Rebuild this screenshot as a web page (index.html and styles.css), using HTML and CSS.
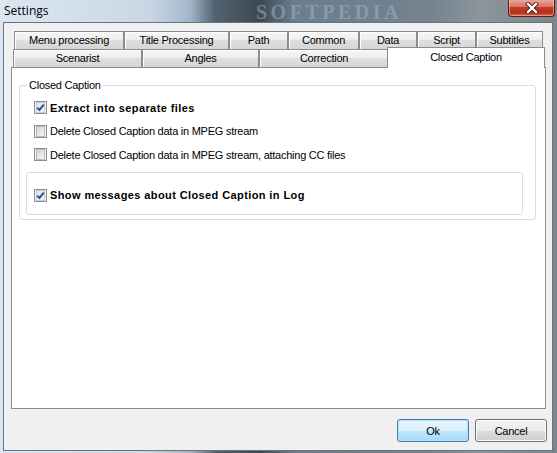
FILE: index.html
```html
<!DOCTYPE html>
<html lang="en">
<head>
    <meta charset="UTF-8">
    <title>Settings</title>
    <link rel="stylesheet" href="styles.css">
</head>
<body>
    <div class="window">
        <div class="titlebar">
            <span class="title">Settings</span>
            <span class="watermark">SOFTPEDIA</span>
            <div class="close">
                <svg width="18" height="12" viewBox="0 0 18 12">
                    <path d="M5 2 L13 10 M13 2 L5 10" stroke="#4a1a12" stroke-width="4.2" stroke-linecap="square"/>
                    <path d="M5 2 L13 10 M13 2 L5 10" stroke="#fff" stroke-width="2.4" stroke-linecap="square"/>
                </svg>
            </div>
        </div>

        <div class="client">
            <div class="tabs">
                <div class="tab-row row-top">
                    <div class="tab" style="width:110px">Menu processing</div>
                    <div class="tab" style="width:105px">Title Processing</div>
                    <div class="tab" style="width:59px">Path</div>
                    <div class="tab" style="width:71px">Common</div>
                    <div class="tab" style="width:58px">Data</div>
                    <div class="tab" style="width:59px">Script</div>
                    <div class="tab" style="width:67px">Subtitles</div>
                </div>
                <div class="tab-row row-bottom">
                    <div class="tab" style="width:129px">Scenarist</div>
                    <div class="tab" style="width:117px">Angles</div>
                    <div class="tab" style="width:130px">Correction</div>
                    <div class="tab selected" style="width:158px">Closed Caption</div>
                </div>
            </div>

            <div class="page">
                <fieldset class="group">
                    <legend>Closed Caption</legend>
                    <div class="option bold">
                        <span class="check checked"><svg width="9" height="9" viewBox="0 0 9 9"><path d="M1.2 4.6 L3.4 7 L7.8 1.6" fill="none" stroke="#2f4f9a" stroke-width="2"/></svg></span>
                        Extract into separate files
                    </div>
                    <div class="option">
                        <span class="check"></span>
                        Delete Closed Caption data in MPEG stream
                    </div>
                    <div class="option">
                        <span class="check"></span>
                        Delete Closed Caption data in MPEG stream, attaching CC files
                    </div>
                    <div class="panel">
                        <div class="option bold">
                            <span class="check checked"><svg width="9" height="9" viewBox="0 0 9 9"><path d="M1.2 4.6 L3.4 7 L7.8 1.6" fill="none" stroke="#2f4f9a" stroke-width="2"/></svg></span>
                            Show messages about Closed Caption in Log
                        </div>
                    </div>
                </fieldset>
            </div>

            <div class="footer">
                <button class="btn default">Ok</button>
                <button class="btn">Cancel</button>
            </div>
        </div>
    </div>
</body>
</html>
```

FILE: styles.css
```css
* {
    margin: 0;
    padding: 0;
    box-sizing: border-box;
}

body {
    font-family: 'Liberation Sans', Arial, sans-serif;
    font-size: 11px;
    letter-spacing: -0.25px;
    color: #000;
    overflow: hidden;
}

/* window frame, glass look */
.window {
    width: 557px;
    height: 453px;
    display: flex;
    flex-direction: column;
    background: linear-gradient(90deg,
        #dbe6f2 0px, #c9d7e5 150px, #a3b6c8 190px, #51626f 215px,
        #3c4953 260px, #6b7e8e 295px, #73838f 430px, #8c959b 480px,
        #7b868e 557px);
}

.titlebar {
    height: 22px;
    position: relative;
    display: flex;
    align-items: center;
    padding-left: 4px;
}

.title {
    font-family: 'Open Sans', 'Noto Sans', sans-serif;
    font-size: 12px;
    letter-spacing: 0;
    color: #000;
    margin-top: -1px;
}

.watermark {
    position: absolute;
    left: 256px;
    top: 2px;
    font-family: 'Liberation Serif', serif;
    font-weight: bold;
    font-size: 20px;
    line-height: 20px;
    letter-spacing: 3.5px;
    color: #a6b6c4;
    opacity: 0.5;
}

.close {
    position: absolute;
    right: 2px;
    top: -1px;
    width: 47px;
    height: 18px;
    border: 1px solid #5e1c12;
    border-top: none;
    border-radius: 0 0 4px 4px;
    background: linear-gradient(#eab0a3, #d9735f 45%, #c43d22 50%, #b9301a 80%, #d8694a);
    box-shadow: inset 0 0 0 1px rgba(255, 220, 210, 0.45);
    display: flex;
    align-items: center;
    justify-content: center;
}

.client {
    flex: 1;
    margin: 0 4px 2px 3px;
    border: 1px solid #6b737b;
    background: #f0f0f0;
    padding: 8px 6px 0 7px;
    display: flex;
    flex-direction: column;
}

/* tabs */
.tab-row {
    display: flex;
    height: 18px;
}

.row-top {
    margin-left: 3px;
}

.row-bottom {
    margin-left: 2px;
}

.tab {
    height: 18px;
    border: 1px solid #898c95;
    border-bottom: none;
    background: linear-gradient(#f7f7f7, #ececec 50%, #dfdfdf 50%, #d5d5d5);
    box-shadow: inset 1px 1px 0 #fff;
    text-align: center;
    line-height: 17px;
    white-space: nowrap;
}

.tab.selected {
    position: relative;
    z-index: 1;
    height: 21px;
    margin-top: -2px;
    margin-left: -2px;
    background: #fff;
    box-shadow: none;
    line-height: 18px;
}

.page {
    flex: 1;
    background: #fff;
    border: 1px solid #898c95;
    padding-top: 11px;
}

/* group box */
.group {
    margin: 0 9px 0 7px;
    border: 1px solid #d5dfe5;
    border-radius: 3px;
    padding: 4px 12px 4px 14px;
}

.group legend {
    margin-left: -7px;
    padding: 0 2px;
    line-height: 13px;
}

.option {
    height: 23.5px;
    display: flex;
    align-items: center;
    gap: 3px;
    white-space: nowrap;
}

.option.bold {
    font-weight: bold;
    letter-spacing: 0.4px;
}

.check {
    width: 13px;
    height: 13px;
    flex: none;
    border: 1px solid #8e8f8f;
    background: #f4f4f4;
    padding: 1px;
    display: flex;
    align-items: center;
    justify-content: center;
}

.check::before {
    content: '';
    display: block;
    width: 9px;
    height: 9px;
    border: 1px solid #b5bbc2;
    background: linear-gradient(135deg, #cdd1d6, #e9eaec 60%, #f6f6f6);
}

.check.checked {
    position: relative;
}

.check.checked::before {
    border-color: #c6ccd3;
    background: linear-gradient(135deg, #e2e6ea, #f5f6f7);
}

.check.checked svg {
    position: absolute;
    left: 1px;
    top: 1px;
}

.panel {
    margin: 5px 0 0 -8px;
    border: 1px solid #d5dfe5;
    border-radius: 3px;
    padding: 11px 7px 7px;
}

/* dialog buttons */
.footer {
    height: 41px;
    display: flex;
    justify-content: flex-end;
    align-items: flex-start;
    gap: 6px;
    padding-top: 10px;
    margin-right: -1px;
}

.btn {
    width: 72px;
    height: 23px;
    font-family: 'Liberation Sans', Arial, sans-serif;
    font-size: 11px;
    letter-spacing: -0.25px;
    color: #000;
    border: 1px solid #707070;
    border-radius: 3px;
    background: linear-gradient(#f2f2f2, #ebebeb 50%, #dddddd 50%, #cfcfcf);
    box-shadow: inset 0 0 0 1px #fcfcfc;
}

.btn.default {
    border-color: #3c7fb1;
    background: linear-gradient(#eaf6fd, #d9f0fc 50%, #bee6fd 50%, #a7d9f5);
    box-shadow: inset 0 0 0 1px #b8e0f6;
}
```
